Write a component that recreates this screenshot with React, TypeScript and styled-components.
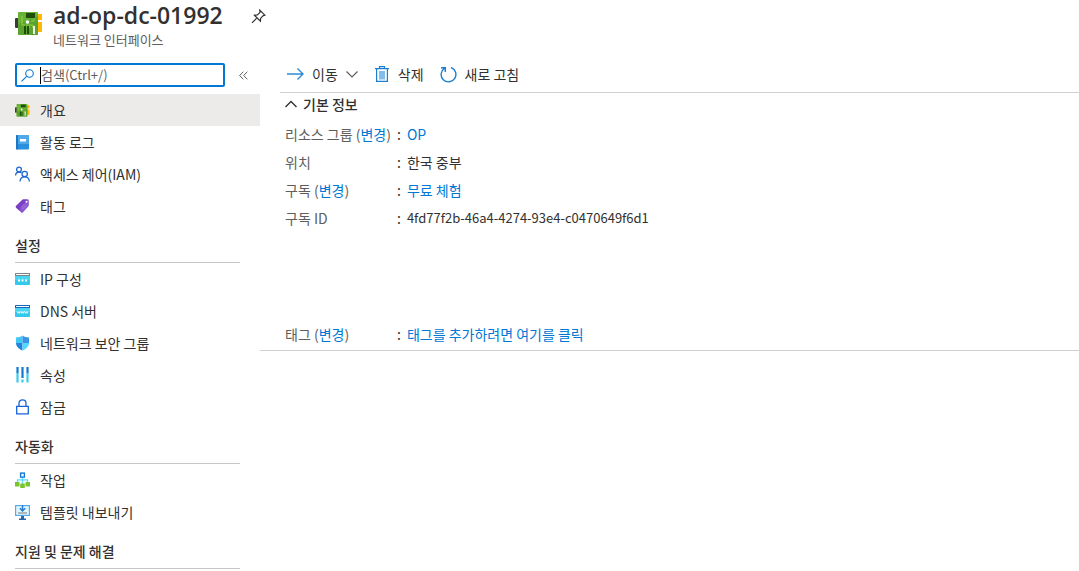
import React from "react";
import styled, { createGlobalStyle } from "styled-components";

const Global = createGlobalStyle`
  * { box-sizing: border-box; }
  body {
    margin: 0;
    background: #fff;
    color: #323130;
    font: 14px/20px "Noto Sans CJK KR", sans-serif;
  }
  svg { display: block; flex: none; }
  h1, h2, dl, dd, dt, ul { margin: 0; padding: 0; }
  button, input { font: inherit; color: inherit; border: 0; padding: 0; background: none; }
  a { color: #0078d4; text-decoration: none; }
`;

const Blade = styled.div`
  min-height: 100vh;
`;
const Header = styled.header`
  display: flex;
  align-items: flex-start;
  height: 60px;
  padding: 0 15px;
`;
const HeaderIcon = styled.div`
  width: 38px;
  padding-top: 12px;
`;
const Title = styled.h1`
  font: 600 23px/30px "Open Sans", sans-serif;
`;
const Subtitle = styled.div`
  color: #605e5c;
  font-size: 13px;
  line-height: 20px;
`;
const PinButton = styled.button`
  margin: 9px 0 0 28px;
`;
const Columns = styled.div`
  display: flex;
  align-items: flex-start;
`;
const Sidebar = styled.nav`
  flex: none;
  width: 260px;
  padding-top: 3px;
`;
const SearchRow = styled.div`
  display: flex;
  align-items: center;
  gap: 14px;
  padding-left: 15px;
  margin-bottom: 7px;
`;
const SearchBox = styled.label`
  display: flex;
  align-items: center;
  width: 210px;
  height: 24px;
  padding-left: 4px;
  border: 2px solid #0078d4;
  border-radius: 2px;
`;
const Caret = styled.span`
  width: 1px;
  height: 17px;
  margin-left: 4px;
  background: #000;
`;
const SearchInput = styled.input`
  flex: 1;
  min-width: 0;
  outline: none;
  font-size: 13px;
  &::placeholder { color: #605e5c; opacity: 1; }
`;
const List = styled.ul`
  list-style: none;
`;
const Item = styled.a<{ $active?: boolean }>`
  display: flex;
  align-items: center;
  gap: 10px;
  height: 32px;
  padding: 0 15px;
  color: #323130;
  background: ${(p) => (p.$active ? "#edebe9" : "transparent")};
`;
const GroupTitle = styled.h2`
  height: 41px;
  margin: 0 20px 0 15px;
  padding-top: 13px;
  border-bottom: 1px solid #c8c6c4;
  font-size: 14px;
  font-weight: 500;
`;
const Main = styled.main`
  flex: 1;
  min-width: 0;
  border-bottom: 1px solid #d2d0ce;
`;
const Toolbar = styled.div`
  display: flex;
  align-items: center;
  gap: 16px;
  height: 33px;
  margin-left: 20px;
  padding: 0 7px 4px;
  border-bottom: 1px solid #d2d0ce;
`;
const Command = styled.button`
  display: flex;
  align-items: center;
  gap: 8px;
`;
const Essentials = styled.section`
  padding: 1px 25px 2px;
`;
const EssentialsToggle = styled.button`
  display: flex;
  align-items: center;
  gap: 6px;
  height: 20px;
  margin-bottom: 6px;
  font-weight: 500;
`;
const Facts = styled.dl`
  display: grid;
  grid-template-columns: 112px 1fr;
  line-height: 28px;
  dt { color: #605e5c; white-space: nowrap; }
`;
const TagFacts = styled(Facts)`
  margin-top: 88px;
`;
const Value = styled.dd`
  display: flex;
  gap: 6px;
  &::before { content: ":"; }
`;
const Guid = styled.span`
  font-size: 13px;
`;

const BoardIcon = ({ width = 28, height = 24 }: { width?: number; height?: number }) => (
  <svg width={width} height={height} viewBox="0 0 28 24">
    <rect y="6" width="4" height="10" rx="1" fill="#3b3b3b" />
    <path d="M22 2h5v6h-5zM22 10h5v10h-5z" fill="#ffb900" />
    <rect x="3" width="20" height="23" rx="1" fill="#68b236" />
    <path d="M3 12 23 4v18a1 1 0 0 1-1 1H4a1 1 0 0 1-1-1z" fill="#5ba22f" />
    <path d="M7 4v9h3M12 11v4M16 9h3V6M14 16v-3h4v3" fill="none" stroke="#8fd43c" />
    <rect x="11" y="1" width="9" height="5" fill="#1e4d0c" />
    <path d="M9 14h2v8H9zM12 14h2v8h-2z" fill="#1e4d0c" />
    <path d="M18 14h2v8h-2z" fill="#f2f2f2" />
    <circle cx="12.500" cy="10" r="1.800" fill="#fff" />
  </svg>
);

const Svg = ({ children }: { children: React.ReactNode }) => (
  <svg width="15" height="16" viewBox="0 0 15 16" fill="none">
    {children}
  </svg>
);

const LogIcon = () => (
  <Svg>
    <rect x="1" y="1" width="13" height="14.500" rx="1" fill="#2a8fdd" />
    <path d="M3 1h10a1 1 0 0 1 1 1v8H3z" fill="#50a8ea" />
    <path d="M1 2a1 1 0 0 1 1-1h1v14.500H2a1 1 0 0 1-1-1z" fill="#1b77c2" />
    <rect x="5" y="5" width="6" height="2.500" fill="#fff" />
  </Svg>
);
const PeopleIcon = () => (
  <Svg>
    <g stroke="#1f68d1" strokeWidth="1.300">
      <circle cx="4" cy="3.500" r="2.400" />
      <path d="M.6 9.500C.7 7.300 2 6 4 6c1 0 1.800.3 2.400.9" />
      <circle cx="9.700" cy="8" r="2.700" />
      <path d="M5 15.500c.2-2.900 2-4.700 4.700-4.700s4.500 1.800 4.700 4.700" />
    </g>
  </Svg>
);
const TagIcon = () => (
  <Svg>
    <path d="m1 8 6.500-6.200c.3-.3.6-.4 1-.4l4.300.2c.6 0 1 .5 1 1.100v4.500c0 .4-.2.700-.4 1L7.800 14.500c-.4.400-1 .4-1.500 0L1 9.500c-.4-.4-.4-1 0-1.500z" fill="#8a55cf" />
    <path d="m1 8 6.500-6.200c.3-.3.6-.4 1-.4l4.300.2L4 12.300 1 9.500c-.4-.4-.4-1 0-1.500z" fill="#7a3fc4" />
    <path d="m6 9.500 4-4M7.500 11l4-4" stroke="#b796e6" strokeWidth=".7" />
    <circle cx="11.500" cy="3.800" r="1" fill="#fff" />
  </Svg>
);
const WindowIcon = ({ bar, dns }: { bar: string; dns?: boolean }) => (
  <Svg>
    <rect y="2" width="15" height="12" rx=".7" fill="#32c9ec" />
    <path d="M0 5h15v4H0z" fill="#48d5f4" />
    <path d="M.7 2h13.600c.4 0 .7.300.7.700V5H0V2.700c0-.4.300-.7.700-.7z" fill={bar} />
    <rect x="1" y="3" width="13" height="1" fill="#fff" />
    {dns ? (
      <path d="m2.300 8.300.8 2 .8-1.600.8 1.600.8-2m.5 0 .8 2 .8-1.600.8 1.600.8-2m.5 0 .8 2 .8-1.600.8 1.600.8-2" stroke="#fff" strokeWidth=".8" />
    ) : (
      <path d="M3 9.500h2M6.500 9.500h2M10 9.500h2" stroke="#fff" strokeWidth="2" />
    )}
  </Svg>
);
const ShieldIcon = () => (
  <Svg>
    <path d="M7.500.5C5.500 2.100 3.500 2.300 1 2.500V8h6.500z" fill="#41c8f5" />
    <path d="M7.500.5c2 1.600 4 1.800 6.500 2V8H7.500z" fill="#3a93e6" />
    <path d="M1 8c0 3.500 3 6 6.500 7.500V8z" fill="#2583dc" />
    <path d="M14 8c0 3.500-3 6-6.500 7.500V8z" fill="#50d9fa" />
  </Svg>
);
const PropertiesIcon = () => (
  <Svg>
    <path d="M2.500 0v6M12.500 0v6M7.500 0v11" stroke="#1277cf" strokeWidth="2.200" />
    <path d="M2.500 6v9.500M12.500 6v9.500M7.500 12.500v3" stroke="#3bcbea" strokeWidth="2.200" />
  </Svg>
);
const LockIcon = () => (
  <Svg>
    <path d="M1.700 7.300h11.600v7.500H1.700zM4 7V4.300C4 2.300 5.500.8 7.500.8S11 2.300 11 4.300V7" stroke="#1765d8" strokeWidth="1.300" />
  </Svg>
);
const TasksIcon = () => (
  <Svg>
    <path d="M7.500 5.500V12M2.500 11V7.800h10V11" stroke="#5adcf8" strokeWidth="1.300" />
    <rect x="5.600" y="1.100" width="3.800" height="4" stroke="#1478d4" strokeWidth="1.400" fill="#fff" />
    <path d="M0 10h4.500v4.500H0zM10.500 10H15v4.500h-4.500zM5.200 11.500h4.600V16H5.200z" fill="#7ac52f" />
  </Svg>
);
const ExportIcon = () => (
  <Svg>
    <rect x=".6" y="1.600" width="13.800" height="9.800" stroke="#52aeea" strokeWidth="1.200" fill="#e6f5fd" />
    <path d="M3 9h9" stroke="#8a8a8a" strokeWidth="1.200" />
    <path d="M7.500 1v5.500M4.800 4.300l2.700 2.700 2.700-2.700" stroke="#1f7fd8" strokeWidth="1.500" />
    <path d="M6 12h3v2.500H6zM4 14.500h7V16H4z" fill="#2467a8" />
  </Svg>
);

const PinIcon = () => (
  <svg width="15" height="15" viewBox="0 0 15 15" fill="none" stroke="#323130" strokeWidth="1.200">
    <path d="m8.800 1.200 5 5-1.500.4-2.600 2.600-.3 3-6-6 3-.3L9 3.300zM5.500 9.300 1 13.800" />
  </svg>
);
const SearchIcon = () => (
  <svg width="15" height="15" viewBox="0 0 15 15" fill="none" stroke="#0078d4" strokeWidth="1.100">
    <circle cx="8.500" cy="5.500" r="3.800" />
    <path d="m5.700 8.300-5.200 5" />
  </svg>
);
const CollapseIcon = () => (
  <svg width="9" height="9" viewBox="0 0 9 9" fill="none" stroke="#605e5c">
    <path d="M4.300.7.700 4.500l3.600 3.800M8.300.7 4.700 4.500l3.600 3.800" />
  </svg>
);
const MoveIcon = () => (
  <svg width="17" height="16" viewBox="0 0 17 16" fill="none" stroke="#2b8ad8" strokeWidth="1.400">
    <path d="M0 8h16M10.500 2.500 16 8l-5.500 5.500" />
  </svg>
);
const DownIcon = () => (
  <svg width="12" height="8" viewBox="0 0 12 8" fill="none" stroke="#605e5c" strokeWidth="1.200">
    <path d="m.5 1.500 5.500 5.500 5.500-5.500" />
  </svg>
);
const UpIcon = () => (
  <svg width="12" height="8" viewBox="0 0 12 8" fill="none" stroke="#323130" strokeWidth="1.400">
    <path d="m.5 7 5.500-5.500L11.500 7" />
  </svg>
);
const TrashIcon = () => (
  <svg width="16" height="16" viewBox="-1 0 16 16" fill="none" stroke="#1a7fd4" strokeWidth="1.200">
    <path d="M0 2.600h14M4.500 2.500V.6h5v1.900M1.600 3v12.400h10.800V3" />
    <path d="M4 5h6v8.500H4z" fill="#83bdec" stroke="none" />
  </svg>
);
const RefreshIcon = () => (
  <svg width="17" height="17" viewBox="0 0 17 17" fill="none" stroke="#1a7fd4" strokeWidth="1.400">
    <path d="M11 1.500a7.400 7.400 0 1 1-6.600.8M1 1.700h4.300V6" />
  </svg>
);

type Entry = { label: string; icon: React.ReactNode; active?: boolean };

const general: Entry[] = [
  { label: "개요", icon: <BoardIcon width={15} height={13} />, active: true },
  { label: "활동 로그", icon: <LogIcon /> },
  { label: "액세스 제어(IAM)", icon: <PeopleIcon /> },
  { label: "태그", icon: <TagIcon /> },
];
const settings: Entry[] = [
  { label: "IP 구성", icon: <WindowIcon bar="#7b8288" /> },
  { label: "DNS 서버", icon: <WindowIcon bar="#1267b8" dns /> },
  { label: "네트워크 보안 그룹", icon: <ShieldIcon /> },
  { label: "속성", icon: <PropertiesIcon /> },
  { label: "잠금", icon: <LockIcon /> },
];
const automation: Entry[] = [
  { label: "작업", icon: <TasksIcon /> },
  { label: "템플릿 내보내기", icon: <ExportIcon /> },
];

const Menu = ({ entries }: { entries: Entry[] }) => (
  <List>
    {entries.map((e) => (
      <li key={e.label}>
        <Item href="#" $active={e.active} aria-current={e.active ? "page" : undefined}>
          {e.icon}
          {e.label}
        </Item>
      </li>
    ))}
  </List>
);

export default function App() {
  return (
    <Blade>
      <Global />
      <Header>
        <HeaderIcon>
          <BoardIcon />
        </HeaderIcon>
        <div>
          <Title>ad-op-dc-01992</Title>
          <Subtitle>네트워크 인터페이스</Subtitle>
        </div>
        <PinButton aria-label="고정">
          <PinIcon />
        </PinButton>
      </Header>
      <Columns>
        <Sidebar>
          <SearchRow>
            <SearchBox>
              <SearchIcon />
              <Caret />
              <SearchInput type="text" aria-label="검색" placeholder="검색(Ctrl+/)" />
            </SearchBox>
            <button aria-label="메뉴 축소">
              <CollapseIcon />
            </button>
          </SearchRow>
          <Menu entries={general} />
          <GroupTitle>설정</GroupTitle>
          <Menu entries={settings} />
          <GroupTitle>자동화</GroupTitle>
          <Menu entries={automation} />
          <GroupTitle>지원 및 문제 해결</GroupTitle>
        </Sidebar>
        <Main>
          <Toolbar>
            <Command>
              <MoveIcon />
              이동
              <DownIcon />
            </Command>
            <Command>
              <TrashIcon />
              삭제
            </Command>
            <Command>
              <RefreshIcon />
              새로 고침
            </Command>
          </Toolbar>
          <Essentials>
            <EssentialsToggle aria-expanded="true">
              <UpIcon />
              기본 정보
            </EssentialsToggle>
            <Facts>
              <dt>
                리소스 그룹 (<a href="#">변경</a>)
              </dt>
              <Value>
                <a href="#">OP</a>
              </Value>
              <dt>위치</dt>
              <Value>한국 중부</Value>
              <dt>
                구독 (<a href="#">변경</a>)
              </dt>
              <Value>
                <a href="#">무료 체험</a>
              </Value>
              <dt>구독 ID</dt>
              <Value>
                <Guid>4fd77f2b-46a4-4274-93e4-c0470649f6d1</Guid>
              </Value>
            </Facts>
            <TagFacts>
              <dt>
                태그 (<a href="#">변경</a>)
              </dt>
              <Value>
                <a href="#">태그를 추가하려면 여기를 클릭</a>
              </Value>
            </TagFacts>
          </Essentials>
        </Main>
      </Columns>
    </Blade>
  );
}
